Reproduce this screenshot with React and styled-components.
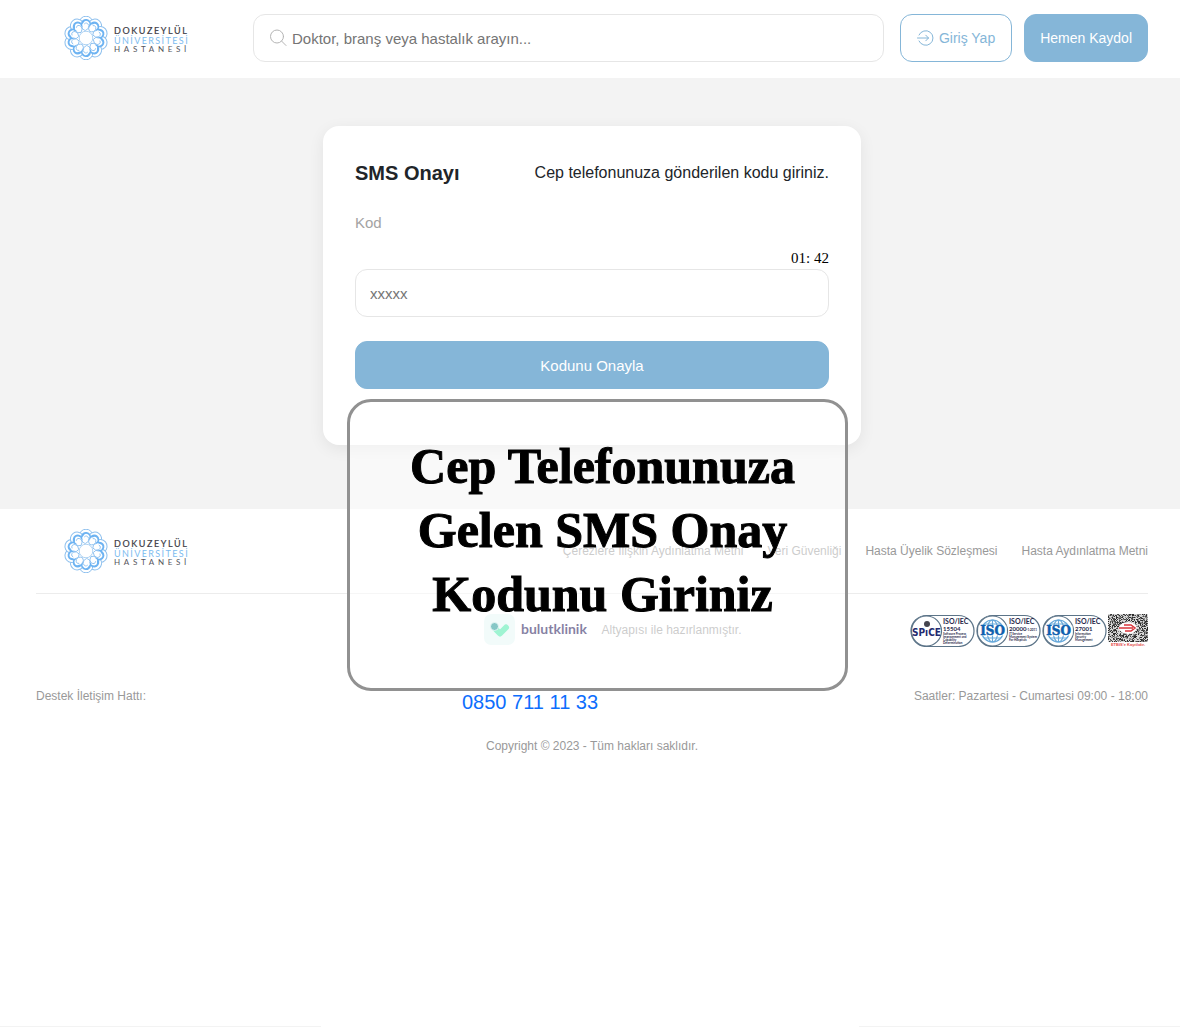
import React, { useState } from "react";
import styled, { createGlobalStyle } from "styled-components";

const GlobalStyle = createGlobalStyle`
  * {
    box-sizing: border-box;
  }

  body {
    margin: 0;
    background: #fff;
    color: #212529;
    font-family: "Liberation Sans", Arial, sans-serif;
    font-size: 16px;
  }

  button,
  input {
    font-family: inherit;
  }
`;

const Page = styled.div`
  display: flex;
  flex-direction: column;
  min-height: 100vh;
`;

const Header = styled.header`
  display: flex;
  align-items: center;
  padding: 14px 32px 16px 36px;
  background: #fff;
`;

const LogoLink = styled.a`
  display: flex;
  flex: none;
  width: 180px;
  padding-left: 27px;
`;

const SearchBox = styled.label`
  display: flex;
  flex: 1;
  align-items: center;
  gap: 4px;
  height: 48px;
  margin: 0 16px 0 37px;
  padding: 0 16px;
  border: 1px solid #e6e6e6;
  border-radius: 12px;
`;

const SearchInput = styled.input`
  flex: 1;
  min-width: 0;
  padding: 0;
  border: none;
  outline: none;
  background: transparent;
  font-size: 15px;

  &::placeholder {
    color: #757575;
    opacity: 1;
  }
`;

const Actions = styled.div`
  display: flex;
  gap: 12px;
`;

const Button = styled.button`
  display: flex;
  align-items: center;
  justify-content: center;
  gap: 4px;
  height: 48px;
  width: ${(props) => (props.$block ? "100%" : "auto")};
  padding: ${(props) => (props.$outline ? "0 16px" : "0 15px")};
  border: 1px solid #85b6d8;
  border-radius: 12px;
  background: ${(props) => (props.$outline ? "#fff" : "#85b6d8")};
  color: ${(props) => (props.$outline ? "#85b6d8" : "#fff")};
  font-size: ${(props) => (props.$block ? "15px" : "14px")};
  white-space: nowrap;
  cursor: pointer;
`;

const Main = styled.main`
  display: flex;
  justify-content: center;
  padding: 48px 32px 64px 36px;
  background: #f3f3f3;
`;

const CardArea = styled.div`
  position: relative;
  width: 100%;
  max-width: 538px;
`;

const Card = styled.form`
  padding: 32px 32px 56px;
  border-radius: 16px;
  background: #fff;
  box-shadow: 0 4px 16px rgba(0, 0, 0, 0.07);
`;

const CardHead = styled.div`
  display: flex;
  align-items: center;
  justify-content: space-between;
  height: 30px;
`;

const Title = styled.h1`
  margin: 0;
  font-size: 20px;
  line-height: 30px;
`;

const Hint = styled.p`
  margin: 0;
  line-height: 24px;
`;

const CodeLabel = styled.label`
  display: block;
  margin-top: 24px;
  color: #a3a3a3;
  font-size: 15px;
  line-height: 22px;
`;

const Timer = styled.div`
  margin-top: 16px;
  padding-bottom: 2px;
  color: #000;
  font-family: "Liberation Serif", "Times New Roman", serif;
  font-size: 15px;
  line-height: 17px;
  text-align: right;
`;

const CodeInput = styled.input`
  display: block;
  width: 100%;
  height: 48px;
  margin-bottom: 24px;
  padding: 0 14px;
  border: 1px solid #e6e6e6;
  border-radius: 12px;
  outline: none;
  font-size: 15px;

  &::placeholder {
    color: #757575;
    opacity: 1;
  }
`;

const Callout = styled.div`
  position: absolute;
  top: 273px;
  left: 24px;
  width: 501px;
  height: 292px;
  padding: 32px 36px 0 46px;
  border: 3px solid #919191;
  border-radius: 24px;
  background: rgba(255, 255, 255, 0.5);
  color: #000;
  font-family: "Liberation Serif", "Times New Roman", serif;
  font-size: 50px;
  font-weight: bold;
  line-height: 64px;
  text-align: center;
  -webkit-text-stroke: 1px #000;
`;

const Footer = styled.footer`
  padding: 20px 32px 0 36px;
  color: #999;
  font-size: 12px;
`;

const FooterTop = styled.div`
  display: flex;
  align-items: center;
  justify-content: space-between;
  padding-bottom: 20px;
  border-bottom: 1px solid #ececec;
`;

const FooterNav = styled.nav`
  display: flex;
  gap: 24px;
`;

const FooterLink = styled.a`
  color: #999;
  text-decoration: none;
`;

const FooterMiddle = styled.div`
  display: grid;
  grid-template-columns: 1fr auto 1fr;
  align-items: center;
  padding-top: 19px;
`;

const Provider = styled.div`
  display: flex;
  grid-column: 2;
  align-items: center;
  gap: 13px;
  margin-left: 42px;
`;

const Badges = styled.div`
  display: flex;
  justify-content: flex-end;
  gap: 1px;
`;

const Contact = styled.div`
  display: grid;
  grid-template-columns: 426px 1fr auto;
  align-items: center;
  padding-top: 31px;
  line-height: 18px;
`;

const Phone = styled.a`
  padding-top: 12px;
  color: #0d6efd;
  font-size: 20px;
  line-height: 24px;
  text-decoration: none;
`;

const Copyright = styled.p`
  margin: 23px 0 0;
  line-height: 18px;
  text-align: center;
`;

const PageEnd = styled.div`
  display: flex;
  justify-content: space-between;
  gap: 538px;
  margin-top: auto;
`;

const EndRule = styled.div`
  flex: 1;
  height: 1px;
  background: #f3f3f3;
`;

const petals = Array.from({ length: 10 }, (_, i) => i * 36);

const HospitalLogo = () => (
  <svg width="126" height="44" viewBox="0 0 126 44" role="img" aria-label="Dokuz Eylül Üniversitesi Hastanesi">
    <g transform="translate(23 22)">
      {petals.map((angle) => (
        <circle key={angle} cy="-15" r="6.8" fill="#fff" stroke="#8ec0ee" strokeWidth="1" transform={`rotate(${angle})`} />
      ))}
      <circle r="16" fill="#fff" />
      {petals.map((angle) => (
        <g key={angle} transform={`rotate(${angle})`}>
          <path d="M-5 -14.5 A5 5 0 0 1 5 -13.6 L3.6 -10.5 L3 -12.5 A3 3 0 0 0 -2.4 -15.4 L-4.6 -12.6Z" fill="#6db3f2" />
          <path d="M-4.4 -11.5 Q-4 -8.5 -0.8 -7.4 Q3.4 -9 2.8 -12.6 Q1 -16.5 -1.8 -14" fill="none" stroke="#8fc2f0" strokeWidth="0.9" />
        </g>
      ))}
      <circle r="6.8" fill="#fff" stroke="#a5cdf0" strokeWidth="0.9" />
    </g>
    <g fontFamily="Lato, sans-serif" fontSize="9">
      <text x="51" y="18" fill="#3c3c46" stroke="#3c3c46" strokeWidth="0.2" letterSpacing="1.6">DOKUZEYLÜL</text>
      <text x="51" y="28" fill="#7dbcf0" letterSpacing="1.4">ÜNİVERSİTESİ</text>
      <text x="51" y="36" fill="#55555c" fontSize="8" letterSpacing="3.7">HASTANESİ</text>
    </g>
  </svg>
);

const SearchIcon = () => (
  <svg width="18" height="18" viewBox="0 0 18 18" fill="none" stroke="#b5b5b5" strokeLinecap="round" aria-hidden="true">
    <circle cx="7" cy="7.5" r="6.5" />
    <path d="M11.7 12.2 L16 16.5" />
  </svg>
);

const LoginIcon = () => (
  <svg width="18" height="18" viewBox="0 0 18 18" fill="none" stroke="#85b6d8" strokeLinecap="round" strokeLinejoin="round" aria-hidden="true">
    <path d="M2 6 A7.3 7.3 0 1 1 2 12" />
    <path d="M0.5 9 H11.5 M8.8 6.2 L11.5 9 L8.8 11.8" />
  </svg>
);

const BulutklinikLogo = () => (
  <svg width="104" height="34" viewBox="0 0 104 34" role="img" aria-label="bulutklinik">
    <rect x="0" y="1" width="31" height="31" rx="7" fill="#e5f7f5" />
    <path d="M12.5 17 L16 20.5 L22 14.5" fill="none" stroke="#3ee8a4" strokeWidth="6" strokeLinecap="round" strokeLinejoin="round" />
    <circle cx="10.5" cy="13.5" r="4" fill="#0d8f8d" stroke="#e5f7f5" strokeWidth="0.8" />
    <text x="37" y="21" fill="#0a0048" fontFamily="Lato, sans-serif" fontWeight="bold" fontSize="14">bulutklinik</text>
  </svg>
);

const IsoBadge = ({ spice, number, year, lines }) => (
  <svg width="65" height="33" viewBox="0 0 65 33" role="img" aria-label={`ISO/IEC ${number}`}>
    <rect x="1" y="1.5" width="63" height="31" rx="15.5" fill="#fff" stroke="#5c7488" strokeWidth="1.2" />
    <circle cx="16.5" cy="17" r="15" fill="#fff" stroke="#5c7488" strokeWidth="1.2" />
    {spice ? (
      <g>
        <circle cx="17" cy="10" r="3" fill="#45454f" />
        <text x="16.5" y="22" fill="#232a70" fontSize="10" fontWeight="bold" textAnchor="middle" fontFamily="DejaVu Sans Condensed, Liberation Sans Narrow, sans-serif">SPıCE</text>
      </g>
    ) : (
      <g>
        <g fill="none" stroke="#66a8da" strokeWidth="1.2">
          <circle cx="16.5" cy="17" r="11" />
          <ellipse cx="16.5" cy="17" rx="5.5" ry="11" />
          <path d="M16.5 6 V28 M8 10 H25 M8 24 H25" />
        </g>
        <rect x="2.5" y="11.5" width="28" height="10" fill="#fff" />
        <text x="16.5" y="21" fill="#0d5fae" stroke="#0d5fae" strokeWidth="0.5" fontSize="12" fontWeight="bold" textAnchor="middle" fontFamily="DejaVu Serif, serif">ISO</text>
      </g>
    )}
    <g fill="#28284a" fontFamily="Lato, sans-serif" fontWeight="bold">
      <text x="33" y="10" fontSize="7">ISO/IEC</text>
      <text x="33" y="17" fontSize="6">
        {number}
        {year && <tspan fontSize="3">{year}</tspan>}
      </text>
      {lines.map((line, i) => (
        <text key={line} x="33" y={21 + i * 3} fontSize="3">{line}</text>
      ))}
    </g>
  </svg>
);

const shades = ["#2b2b2b", "#4a4a4a", "#8a8a8a"];
const qrPaths = ["", "", ""];
let seed = 7;
for (let y = 0; y < 28; y += 1) {
  for (let x = 0; x < 40; x += 1) {
    seed = (seed * 16807) % 2147483647;
    const shade = seed % 5;
    if (shade < 3) {
      qrPaths[shade] += `M${x} ${y}h1v1h-1z`;
    }
  }
}

const EtbisCode = () => (
  <svg width="40" height="33" viewBox="0 0 40 33" role="img" aria-label="ETBİS'e Kayıtlıdır">
    <rect width="40" height="28" fill="#d6d6d6" />
    {shades.map((shade, i) => (
      <path key={shade} d={qrPaths[i]} fill={shade} />
    ))}
    <ellipse cx="20" cy="14" rx="9" ry="6" fill="#fff" />
    <path d="M16 11 H23 L27 14 L23 17 H17 M11 14 H25" fill="none" stroke="#d9363c" strokeWidth="1.5" />
    <text x="20" y="32" fill="#e44c4c" fontSize="4" fontWeight="bold" textAnchor="middle">ETBİS'e Kayıtlıdır.</text>
  </svg>
);

const links = ["Çerezlere İlişkin Aydınlatma Metni", "Veri Güvenliği", "Hasta Üyelik Sözleşmesi", "Hasta Aydınlatma Metni"];

const App = () => {
  const [code, setCode] = useState("");

  return (
    <Page>
      <GlobalStyle />
      <Header>
        <LogoLink href="#">
          <HospitalLogo />
        </LogoLink>
        <SearchBox>
          <SearchIcon />
          <SearchInput type="search" aria-label="Arama" placeholder="Doktor, branş veya hastalık arayın..." />
        </SearchBox>
        <Actions>
          <Button type="button" $outline>
            <LoginIcon />
            Giriş Yap
          </Button>
          <Button type="button">Hemen Kaydol</Button>
        </Actions>
      </Header>

      <Main>
        <CardArea>
          <Card onSubmit={(e) => e.preventDefault()}>
            <CardHead>
              <Title>SMS Onayı</Title>
              <Hint>Cep telefonunuza gönderilen kodu giriniz.</Hint>
            </CardHead>
            <CodeLabel htmlFor="code">Kod</CodeLabel>
            <Timer>01: 42</Timer>
            <CodeInput id="code" placeholder="xxxxx" value={code} onChange={(e) => setCode(e.target.value)} />
            <Button type="submit" $block>Kodunu Onayla</Button>
          </Card>
          <Callout>Cep Telefonunuza Gelen SMS Onay Kodunu Giriniz</Callout>
        </CardArea>
      </Main>

      <Footer>
        <FooterTop>
          <LogoLink href="#">
            <HospitalLogo />
          </LogoLink>
          <FooterNav>
            {links.map((link) => (
              <FooterLink key={link} href="#">{link}</FooterLink>
            ))}
          </FooterNav>
        </FooterTop>
        <FooterMiddle>
          <Provider>
            <BulutklinikLogo />
            <span>Altyapısı ile hazırlanmıştır.</span>
          </Provider>
          <Badges>
            <IsoBadge spice number="15504" lines={["Software Process", "Improvement and", "Capability", "Determination"]} />
            <IsoBadge number="20000" year="-1:2011" lines={["IT Service", "Management System", "For Hospitals"]} />
            <IsoBadge number="27001" lines={["Information", "Security", "Management"]} />
            <EtbisCode />
          </Badges>
        </FooterMiddle>
        <Contact>
          <span>Destek İletişim Hattı:</span>
          <Phone href="tel:08507111133">0850 711 11 33</Phone>
          <span>Saatler: Pazartesi - Cumartesi 09:00 - 18:00</span>
        </Contact>
        <Copyright>Copyright © 2023 - Tüm hakları saklıdır.</Copyright>
      </Footer>

      <PageEnd>
        <EndRule />
        <EndRule />
      </PageEnd>
    </Page>
  );
};

export default App;
